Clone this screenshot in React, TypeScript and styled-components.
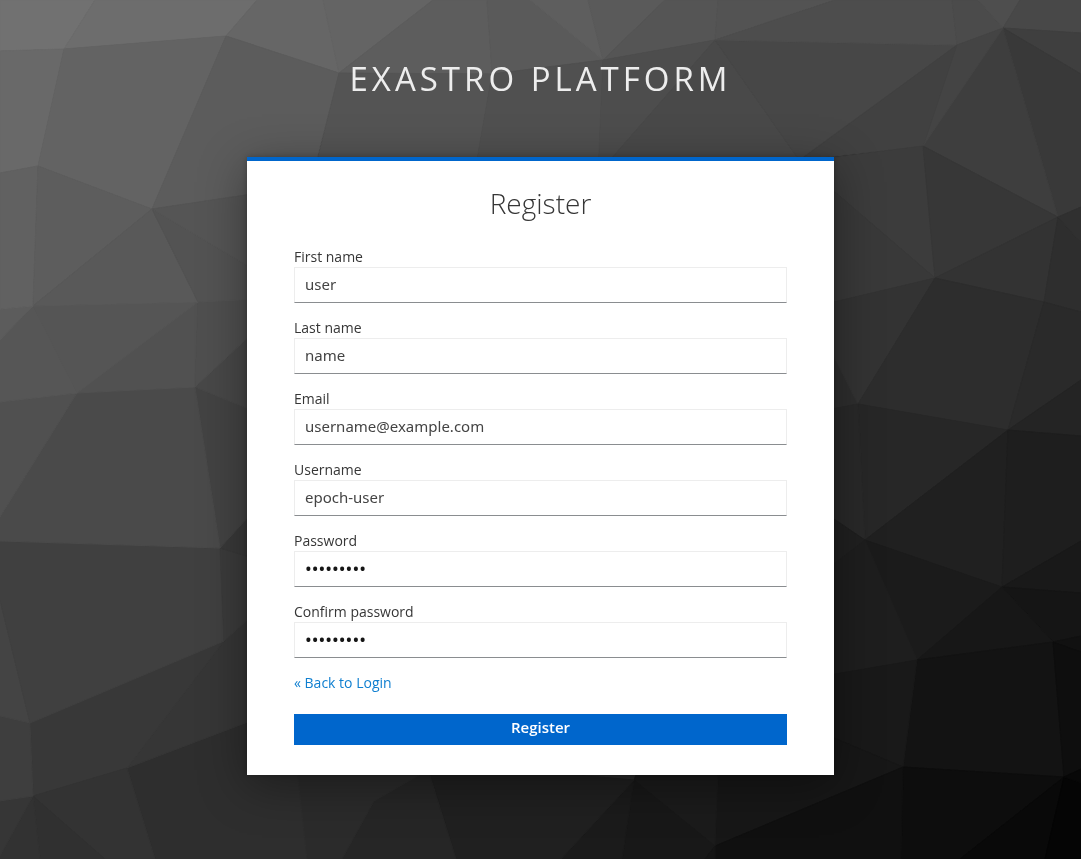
import React from "react";
import styled, { createGlobalStyle } from "styled-components";

const GlobalStyle = createGlobalStyle`
  *, *::before, *::after { box-sizing: border-box; }
  html, body, #root { min-height: 100vh; }
  body {
    margin: 0;
    background: #2b2b2b;
    color: #363636;
    font-family: "Open Sans", "Liberation Sans", sans-serif;
  }
`;

const Page = styled.div`
  display: flex;
  flex-direction: column;
  align-items: center;
  min-height: 100vh;
  padding: 0 20px 84px;
`;

const Backdrop = styled.svg`
  position: fixed;
  inset: 0;
  z-index: -1;
  width: 100%;
  height: 100%;
`;

const Brand = styled.header`
  padding: 59px 0 58px;
  color: #ededed;
  font-size: 33px;
  line-height: 40px;
  letter-spacing: 4px;
  text-align: center;
  text-transform: uppercase;
`;

const Card = styled.main`
  width: 100%;
  max-width: 587px;
  padding: 24px 47px 30px;
  border-top: 4px solid #0066cc;
  background: #ffffff;
  box-shadow: 0 10px 44px rgba(3, 3, 3, 0.38), 0 0 6px rgba(3, 3, 3, 0.25);
`;

const Heading = styled.h1`
  margin: 0 0 26px;
  font-size: 28px;
  font-weight: 300;
  line-height: 36px;
  text-align: center;
`;

const Form = styled.form`
  display: flex;
  flex-direction: column;
  gap: 15px;
`;

const Field = styled.div`
  display: flex;
  flex-direction: column;
`;

const Label = styled.label`
  font-size: 14px;
  line-height: 20px;
`;

const Input = styled.input`
  width: 100%;
  height: 36px;
  padding: 0 10px 2px;
  border: 1px solid #ededed;
  border-bottom-color: #8a8d90;
  border-radius: 0;
  background: #ffffff;
  color: ${(p) => (p.type === "password" ? "#151515" : "#444444")};
  font-family: "Noto Sans", sans-serif;
  font-size: ${(p) => (p.type === "password" ? "18px" : "15px")};
  line-height: 24px;
  outline: none;
`;

const BackLink = styled.a`
  align-self: flex-start;
  color: #0f7fd0;
  font-size: 14px;
  line-height: 20px;
  text-decoration: none;
`;

const Submit = styled.button`
  width: 100%;
  height: 31px;
  margin-top: 6px;
  padding: 0 0 5px;
  border: 0;
  background: #0066cc;
  color: #ffffff;
  font-family: "Open Sans", sans-serif;
  font-size: 15px;
  font-weight: 600;
  line-height: 24px;
  cursor: pointer;
`;

const facets: [string, string][] = [
  ["#717171", "0,0 95,0 64,49 0,51"],
  ["#6d6d6d", "95,0 257,0 226,36 64,49"],
  ["#696969", "0,51 64,49 38,166 0,173"],
  ["#636363", "64,49 226,36 152,209 38,166"],
  ["#666666", "257,0 323,0 339,73 226,36"],
  ["#646464", "323,0 433,0 339,73"],
  ["#5c5c5c", "226,36 339,73 310,185 152,209"],
  ["#5d5d5d", "433,0 487,0 492,74 339,73"],
  ["#5a5a5a", "487,0 530,0 603,60 492,74"],
  ["#5e5e5e", "530,0 588,0 603,60"],
  ["#5a5a5a", "588,0 665,0 603,60"],
  ["#555555", "665,0 718,0 715,40 603,60"],
  ["#535353", "718,0 835,0 715,40"],
  ["#545454", "339,73 492,74 470,200 310,190"],
  ["#505050", "492,74 603,60 597,200 470,200"],
  ["#4d4d4d", "603,60 715,40 575,200 597,200"],
  ["#494949", "715,40 797,157 810,175 575,200"],
  ["#474747", "715,40 957,45 803,157 797,157"],
  ["#4d4d4d", "835,0 952,0 957,45 715,40"],
  ["#4b4b4b", "952,0 978,0 1003,28 957,45"],
  ["#4e4e4e", "978,0 1020,0 1003,28"],
  ["#484848", "1020,0 1081,0 1081,33 1003,28"],
  ["#3f3f3f", "1003,28 1081,33 1081,74"],
  ["#393939", "1003,28 1081,74 1081,207 1058,217"],
  ["#3e3e3e", "1003,28 1058,217 923,146"],
  ["#444444", "957,45 1003,28 923,146"],
  ["#414141", "957,45 923,146 800,160"],
  ["#3c3c3c", "923,146 935,278 800,162"],
  ["#373737", "923,146 1058,217 935,278"],
  ["#393939", "935,278 800,162 800,310"],
  ["#333333", "1058,217 935,278 1044,302"],
  ["#2e2e2e", "1058,217 1044,302 1081,312 1081,243"],
  ["#303030", "1058,217 1081,207 1081,243"],
  ["#2e2e2e", "858,404 800,290 800,415"],
  ["#333333", "935,278 800,310 810,310 858,404"],
  ["#2d2d2d", "935,278 1044,302 1008,430 858,404"],
  ["#2a2a2a", "1044,302 1081,312 1081,380 1008,430"],
  ["#242424", "1008,430 1081,380 1081,436"],
  ["#272727", "858,404 1008,430 865,540"],
  ["#292929", "858,404 865,540 800,496 800,415"],
  ["#202020", "1008,430 865,540 1002,587"],
  ["#1e1e1e", "1008,430 1081,436 1081,541 1002,587"],
  ["#202020", "865,540 800,496 800,590"],
  ["#1b1b1b", "865,540 1002,587 917,660"],
  ["#1e1e1e", "865,540 917,660 800,680 800,590"],
  ["#191919", "1002,587 1081,541 1081,593"],
  ["#151515", "1002,587 1081,593 1081,636 1053,642"],
  ["#171717", "1002,587 1053,642 917,660"],
  ["#131313", "917,660 1053,642 1064,777 903,767"],
  ["#191919", "917,660 903,767 720,690 800,680"],
  ["#171717", "903,767 715,846 720,690"],
  ["#111111", "1053,642 1081,636 1081,652"],
  ["#0e0e0e", "1053,642 1081,652 1081,769 1064,777"],
  ["#0d0d0d", "903,767 1064,777 960,859 901,859"],
  ["#090909", "1064,777 960,859 1045,859"],
  ["#050505", "1064,777 1081,783 1081,859 1045,859"],
  ["#080808", "1064,777 1081,769 1081,783"],
  ["#101010", "715,846 903,767 901,859 715,859"],
  ["#1b1b1b", "634,780 715,846 721,700 650,740"],
  ["#181818", "634,780 715,846 705,859 622,859"],
  ["#151515", "715,846 715,859 705,859"],
  ["#1b1b1b", "634,780 622,859 561,859"],
  ["#202020", "634,780 561,859 456,859 420,740 520,770"],
  ["#262626", "374,801 428,770 456,859 342,859"],
  ["#2b2b2b", "290,740 428,770 374,801 342,859 307,859"],
  ["#2e2e2e", "127,768 290,706 307,859 155,859"],
  ["#363636", "127,768 224,641 300,550 290,706"],
  ["#383838", "127,768 224,641 30,723 33,796"],
  ["#333333", "127,768 33,796 105,859 155,859"],
  ["#303030", "33,796 105,859 40,859"],
  ["#323232", "33,796 40,859 0,859 0,856"],
  ["#363636", "33,796 0,856 0,801"],
  ["#3e3e3e", "33,796 30,723 0,716 0,801"],
  ["#444444", "30,723 0,716 0,600"],
  ["#404040", "30,723 0,600 0,541 220,548 224,641"],
  ["#3b3b3b", "220,548 300,572 224,641"],
  ["#393939", "220,548 300,460 300,572"],
  ["#434343", "220,548 195,387 300,430 300,460"],
  ["#484848", "195,387 300,289 300,430"],
  ["#4a4a4a", "195,387 77,393 0,517 0,541 220,548"],
  ["#505050", "77,393 0,402 0,517"],
  ["#515151", "195,387 77,393 198,302"],
  ["#4f4f4f", "198,302 195,387 300,289"],
  ["#555555", "77,393 198,302 33,306"],
  ["#565656", "77,393 33,306 0,340 0,402"],
  ["#5c5c5c", "33,306 0,309 0,340"],
  ["#616161", "33,306 38,166 0,173 0,309"],
  ["#5d5d5d", "33,306 38,166 152,209"],
  ["#595959", "33,306 152,209 198,302"],
  ["#535353", "198,302 152,209 300,297"],
  ["#555555", "152,209 300,187 300,297"],
];

const fields = [
  { id: "firstName", label: "First name", type: "text", value: "user" },
  { id: "lastName", label: "Last name", type: "text", value: "name" },
  { id: "email", label: "Email", type: "text", value: "username@example.com" },
  { id: "username", label: "Username", type: "text", value: "epoch-user" },
  { id: "password", label: "Password", type: "password", value: "epochuser" },
  { id: "confirm", label: "Confirm password", type: "password", value: "epochuser" },
];

export default function App() {
  return (
    <>
      <GlobalStyle />
      <Backdrop viewBox="0 0 1081 859" preserveAspectRatio="none" aria-hidden="true">
        {facets.map(([tone, points]) => (
          <polygon key={points} points={points} fill={tone} stroke={tone} strokeWidth="1" strokeLinejoin="round" />
        ))}
      </Backdrop>
      <Page>
        <Brand>Exastro Platform</Brand>
        <Card>
          <Heading>Register</Heading>
          <Form onSubmit={(e) => e.preventDefault()}>
            {fields.map((f) => (
              <Field key={f.id}>
                <Label htmlFor={f.id}>{f.label}</Label>
                <Input id={f.id} type={f.type} defaultValue={f.value} />
              </Field>
            ))}
            <BackLink href="#login">« Back to Login</BackLink>
            <Submit type="submit">Register</Submit>
          </Form>
        </Card>
      </Page>
    </>
  );
}
